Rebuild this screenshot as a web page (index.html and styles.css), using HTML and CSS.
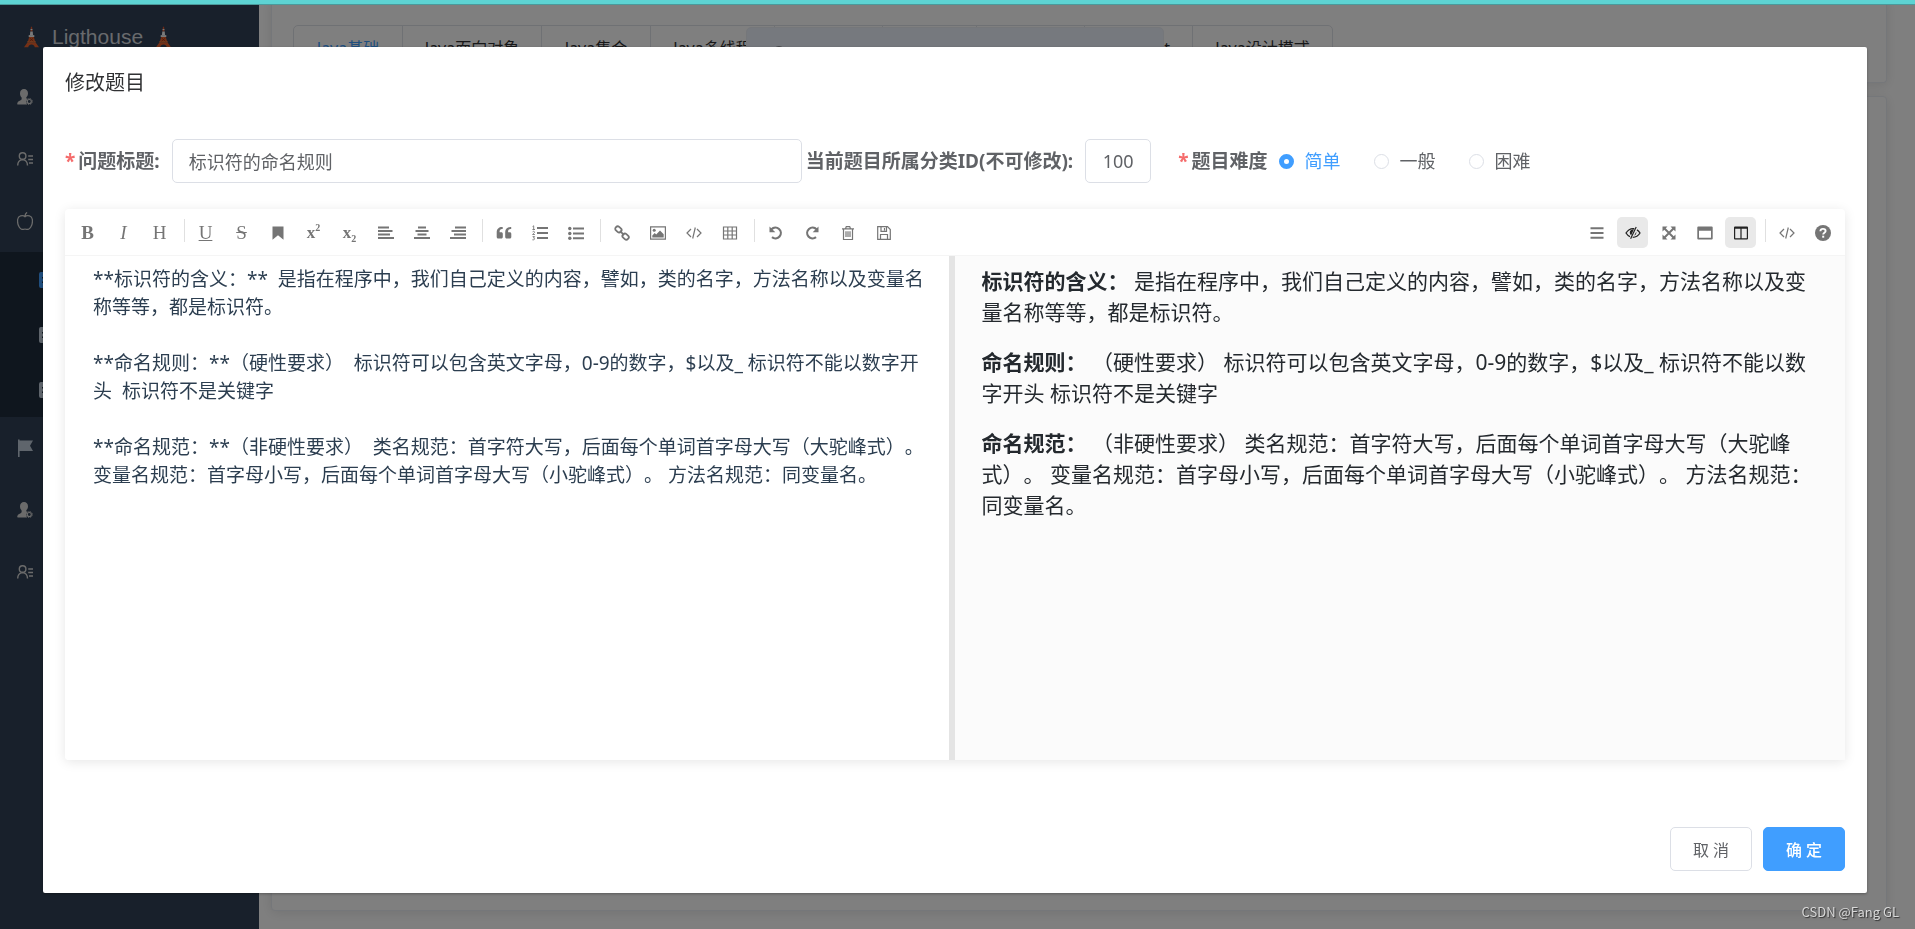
FILE: index.html
```html
<!DOCTYPE html>
<html lang="zh-CN">
<head>
<meta charset="utf-8">
<title>修改题目</title>
<link rel="stylesheet" href="styles.css">
</head>
<body>
<svg class="sprite" aria-hidden="true">
  <symbol id="tower" viewBox="0 0 16 22">
    <path d="M7.400 0h1.200l.5 5H6.900z" fill="#e0552a"/>
    <path d="M6.700 5h2.600l.4 4H6.300z" fill="#f4f4f4"/>
    <path d="M7 2.500h2v1.200H7z" fill="#f4f4f4"/>
    <path d="M5 9h6v2H5z" fill="#f4f4f4"/>
    <path d="M5.500 11h5l1.400 5H4.100z" fill="#e8602c"/>
    <path d="M3.500 15.500h9v1.600h-9z" fill="#f07a3c"/>
    <path d="M3.400 17h9.200L16 22h-4.500c-.4-2-1.700-3-3.500-3s-3.100 1-3.500 3H0z" fill="#e8602c"/>
    <path d="M6 12l4 3.500M10 12l-4 3.500" stroke="#8a3212" stroke-width=".7"/>
  </symbol>
  <symbol id="user-gear" viewBox="0 0 16 16">
    <path d="M7 0c2.400 0 4 1.700 4 4.200 0 1.800-.7 3.200-1.700 4 0 1 .3 1.500 1.100 1.900-.9.900-1.300 2-1.200 3.200.1 1 .5 1.700 1 2.200H1c-.7 0-.9-.4-.7-1.200.5-1.800 1.900-2.300 3.700-3.200.7-.4.8-1.600.6-2.700C3.600 7.500 3 6 3 4.200 3 1.700 4.600 0 7 0z" fill="currentColor"/>
    <circle cx="12.300" cy="12.500" r="2" fill="none" stroke="currentColor" stroke-width="1.100"/>
    <circle cx="12.300" cy="12.500" r="3" fill="none" stroke="currentColor" stroke-width="1" stroke-dasharray="1.200 1.150"/>
  </symbol>
  <symbol id="user-list" viewBox="0 0 16 16">
    <g fill="none" stroke="currentColor" stroke-width="1.400">
      <circle cx="5.600" cy="5" r="3.300"/>
      <path d="M.7 14.500c0-3.400 1.600-5.600 4.900-5.900 3.300.3 4.900 2.500 4.900 5.900M11.200 5H16M11.200 8.500H16M12 12H16"/>
    </g>
  </symbol>
  <symbol id="apple" viewBox="0.500 0.700 15 16.700">
    <path d="M8 5C6.300 3.400 1 3.400 1 9c0 4.500 2.500 8 4.800 8 1 0 1.300-.4 2.200-.4s1.200.4 2.200.4C12.500 17 15 13.500 15 9c0-5.600-5.300-5.600-7-4zM8 5c0-2.200.6-3.400 2-4" fill="none" stroke="currentColor" stroke-width="1.200"/>
  </symbol>
  <symbol id="doc" viewBox="0 0 16 16">
    <path d="M2 0h12a2 2 0 0 1 2 2v12a2 2 0 0 1-2 2H2a2 2 0 0 1-2-2V2a2 2 0 0 1 2-2zm1 5v1.500h10V5zm0 4.500V11h7V9.500z" fill="currentColor" fill-rule="evenodd"/>
  </symbol>
  <symbol id="flag" viewBox="0 0 16 18">
    <path d="M1 .5h1.600V18H1zM2.600 1.500H16l-3 5.200 3 5.300H2.600z" fill="currentColor"/>
  </symbol>
  <symbol id="bookmark" viewBox="0 0 16 16"><path d="M2.500 1.500h11v13.200L8 10.200l-5.500 4.500z" fill="currentColor"/></symbol>
  <symbol id="align-left" viewBox="0 0 16 16"><path d="M0 1.500h11v2H0zM0 5h14.500v2H0zM0 8.500h12v2H0zM0 12h16v2H0z" fill="currentColor"/></symbol>
  <symbol id="align-center" viewBox="0 0 16 16"><path d="M4 1.500h8v2H4zM1.500 5h13v2h-13zM3.500 8.500h9v2h-9zM0 12h16v2H0z" fill="currentColor"/></symbol>
  <symbol id="align-right" viewBox="0 0 16 16"><path d="M5 1.500h11v2H5zM1.500 5H16v2H1.500zM4 8.500h12v2H4zM0 12h16v2H0z" fill="currentColor"/></symbol>
  <symbol id="quote" viewBox="0 0 16 16"><path d="M6.700 2v2H6C4.500 4 3.600 5 3.600 6.600v.6h1.700c.9 0 1.500.6 1.500 1.500v3.200c0 .9-.6 1.500-1.500 1.500H2.200C1.300 13.400.7 12.800.7 11.900V7C.7 4 3 2 6 2zM15.200 2v2h-.7c-1.500 0-2.400 1-2.400 2.600v.6h1.700c.9 0 1.500.6 1.500 1.500v3.200c0 .9-.6 1.500-1.500 1.500h-3.100c-.9 0-1.500-.6-1.500-1.500V7c0-3 2.300-5 5.300-5z" fill="currentColor"/></symbol>
  <symbol id="list-ol" viewBox="0 0 16 16"><path d="M5 2h11v2H5zM5 7h11v2H5zM5 12h11v2H5z" fill="currentColor"/><path d="M.6 1.500l1.100-.7v3.700M.4 4.500h2.600M.6 6.800c.8-.9 2.100-.4 1.900.5C2.400 8 1.300 8.500.6 9.500h2.300M.6 11.600h2L1.500 13c1.700 0 1.500 2.300-1.100 1.800" fill="none" stroke="currentColor" stroke-width=".9"/></symbol>
  <symbol id="list-ul" viewBox="0 0 16 16"><g fill="currentColor"><circle cx="1.800" cy="3.500" r="1.700"/><circle cx="1.800" cy="8.500" r="1.700"/><circle cx="1.800" cy="13.300" r="1.700"/><path d="M5 2.500h11v2H5zM5 7.500h11v2H5zM5 12.300h11v2H5z"/></g></symbol>
  <symbol id="link" viewBox="0 0 16 16"><g fill="none" stroke="currentColor" stroke-width="1.800"><rect x="1.100" y="2" width="6.600" height="4.800" rx="2.200" transform="rotate(42 4.400 4.400)"/><rect x="8.300" y="9.200" width="6.600" height="4.800" rx="2.200" transform="rotate(42 11.600 11.600)"/><path d="M5.800 5.800l4.400 4.400"/></g></symbol>
  <symbol id="image" viewBox="0 0 16 16"><path d="M.6 1.900h14.800v12.200H.6z" fill="none" stroke="currentColor" stroke-width="1.200"/><circle cx="4.200" cy="5.200" r="1.500" fill="currentColor"/><path d="M2.300 12.600v-2.200l2.400-2.400 1.500 1.400 3.800-3.800 3.700 3.700v3.300z" fill="currentColor"/></symbol>
  <symbol id="code" viewBox="0 0 16 16"><path d="M5 4L1 8l4 4M11 4l4 4-4 4M9.300 2.500l-2.600 11" fill="none" stroke="currentColor" stroke-width="1.200"/></symbol>
  <symbol id="table" viewBox="0 0 16 16"><path d="M1.500 2h13v12h-13zM1.500 6h13M1.500 10h13M5.800 2v12M10.200 2v12" fill="none" stroke="currentColor" stroke-width="1.200"/></symbol>
  <symbol id="undo" viewBox="0 0 16 16"><path d="M3.500 4.300A5.400 5.400 0 1 1 4 12.200" fill="none" stroke="currentColor" stroke-width="2.200"/><path d="M1.500 1.500v5.800h5.800z" fill="currentColor"/></symbol>
  <symbol id="redo" viewBox="0 0 16 16"><path d="M12.500 4.300A5.400 5.400 0 1 0 12 12.200" fill="none" stroke="currentColor" stroke-width="2.200"/><path d="M14.500 1.500v5.800H8.700z" fill="currentColor"/></symbol>
  <symbol id="trash" viewBox="0 0 16 16"><path d="M2 3.800h12M3.500 3.800v10.700h9V3.800M5.500 3.800l.8-2.200h3.400l.8 2.200M6 6.300V12M8 6.300V12M10 6.300V12" fill="none" stroke="currentColor" stroke-width="1.200"/></symbol>
  <symbol id="save" viewBox="0 0 16 16"><path d="M1.700 1.700h9.800l2.800 2.800v9.800H1.700zM4.500 14V9.500h7V14M5 2v4.300h5.500V2M8.500 3v2.500" fill="none" stroke="currentColor" stroke-width="1.200"/></symbol>
  <symbol id="bars" viewBox="0 0 16 16"><path d="M1.500 2.300h13v2h-13zM1.500 7h13v2h-13zM1.500 11.700h13v2h-13z" fill="currentColor"/></symbol>
  <symbol id="eye-off" viewBox="0 0 16 16"><path d="M9.300 3.700C5.800 3 3 5 1 8c1 1.600 2.400 2.900 4 3.600M12 4.900c1.200.8 2.200 1.800 3 3.100-1.700 2.800-4 4.300-7.300 4.300" fill="none" stroke="currentColor" stroke-width="1.300"/><path d="M11.200 2L5.600 13.800" stroke="currentColor" stroke-width="1.200"/><path d="M8.900 4.200C6.300 4.100 4.800 5.700 4.800 7.600c0 1.200.5 2.100 1.400 2.700zM11.300 6.700c.3 1.800-.5 3.300-2.200 4z" fill="currentColor"/></symbol>
  <symbol id="expand" viewBox="0 0 16 16"><path d="M1.500 1.500h5L1.500 6.500zM14.500 1.500v5l-5-5zM1.500 14.500v-5l5 5zM14.500 14.500h-5l5-5z" fill="currentColor"/><path d="M3 3l10 10M13 3L3 13" stroke="currentColor" stroke-width="2"/></symbol>
  <symbol id="window" viewBox="0 0 16 16"><path d="M1.300 1.500h13.400a1 1 0 0 1 1 1v11a1 1 0 0 1-1 1H1.300a1 1 0 0 1-1-1v-11a1 1 0 0 1 1-1zm.7 4.200v7.100h12V5.700z" fill="currentColor" fill-rule="evenodd"/></symbol>
  <symbol id="columns" viewBox="0 0 16 16"><path d="M2 1.500h12a1 1 0 0 1 1 1v11a1 1 0 0 1-1 1H2a1 1 0 0 1-1-1v-11a1 1 0 0 1 1-1zm.2 2.300v9.500h5.200V3.800zm6.400 0v9.500h5.200V3.800z" fill="currentColor" fill-rule="evenodd"/></symbol>
  <symbol id="help" viewBox="0 0 16 16"><circle cx="8" cy="8" r="8" fill="currentColor"/><path d="M5.400 6.200C5.500 4.600 6.500 3.900 8 3.900c1.600 0 2.600.8 2.600 2.100 0 1.800-2.400 1.700-2.400 3.500" fill="none" stroke="#fff" stroke-width="1.900"/><path d="M7.200 10.700h2v2h-2z" fill="#fff"/></symbol>
</svg>

<div class="app">
  <aside class="sidebar">
    <div class="logo">
      <svg class="tower"><use href="#tower"/></svg>
      <span class="logo-name">Ligthouse</span>
      <svg class="tower"><use href="#tower"/></svg>
    </div>
    <nav class="menu">
      <a class="menu-item" href="#" aria-label="用户"><svg class="menu-icon"><use href="#user-gear"/></svg></a>
      <a class="menu-item" href="#" aria-label="角色"><svg class="menu-icon"><use href="#user-list"/></svg></a>
      <a class="menu-item" href="#" aria-label="题库"><svg class="menu-icon"><use href="#apple"/></svg></a>
      <div class="submenu">
        <a class="submenu-item is-active" href="#" aria-label="题目"><svg class="menu-icon"><use href="#doc"/></svg></a>
        <a class="submenu-item" href="#" aria-label="分类"><svg class="menu-icon"><use href="#doc"/></svg></a>
        <a class="submenu-item" href="#" aria-label="记录"><svg class="menu-icon"><use href="#doc"/></svg></a>
      </div>
      <a class="menu-item is-muted" href="#" aria-label="标记"><svg class="menu-icon"><use href="#flag"/></svg></a>
      <a class="menu-item" href="#" aria-label="用户"><svg class="menu-icon"><use href="#user-gear"/></svg></a>
      <a class="menu-item" href="#" aria-label="角色"><svg class="menu-icon"><use href="#user-list"/></svg></a>
    </nav>
  </aside>
  <main class="main">
    <section class="card card-tabs">
      <div class="tabs">
        <button class="tab is-active">Java基础</button>
        <button class="tab">Java面向对象</button>
        <button class="tab">Java集合</button>
        <button class="tab">Java多线程</button>
        <span class="tab"></span>
        <span class="tab"></span>
        <span class="tab"></span>
        <button class="tab tab-end">t</button>
        <button class="tab">Java设计模式</button>
      </div>
    </section>
    <section class="card card-body"></section>
  </main>
  <div class="message"><span class="message-dot"></span></div>
</div>

<div class="overlay">
  <div class="dialog" role="dialog" aria-labelledby="dialog-title">
    <h1 class="dialog-title" id="dialog-title">修改题目</h1>
    <form class="form-row">
      <label class="label is-required" for="title">问题标题:</label>
      <input class="input input-title" id="title" type="text" value="标识符的命名规则">
      <label class="label label-id" for="cid">当前题目所属分类ID(不可修改):</label>
      <input class="input input-id" id="cid" type="text" value="100" readonly>
      <div class="level" role="radiogroup" aria-labelledby="level-label">
        <span class="label is-required" id="level-label">题目难度</span>
        <label class="radio"><input class="radio-dot" type="radio" name="level" checked><span class="radio-text">简单</span></label>
        <label class="radio"><input class="radio-dot" type="radio" name="level"><span class="radio-text">一般</span></label>
        <label class="radio"><input class="radio-dot" type="radio" name="level"><span class="radio-text">困难</span></label>
      </div>
    </form>

    <div class="editor">
      <div class="toolbar">
        <div class="tools">
          <button class="tool"><b>B</b></button>
          <button class="tool"><i>I</i></button>
          <button class="tool">H</button>
          <span class="divider"></span>
          <button class="tool"><u>U</u></button>
          <button class="tool"><s>S</s></button>
          <button class="tool" aria-label="标记"><svg class="icon"><use href="#bookmark"/></svg></button>
          <button class="tool tool-script"><span>x<sup>2</sup></span></button>
          <button class="tool tool-script"><span>x<sub>2</sub></span></button>
          <button class="tool" aria-label="左对齐"><svg class="icon"><use href="#align-left"/></svg></button>
          <button class="tool" aria-label="居中"><svg class="icon"><use href="#align-center"/></svg></button>
          <button class="tool" aria-label="右对齐"><svg class="icon"><use href="#align-right"/></svg></button>
          <span class="divider"></span>
          <button class="tool" aria-label="引用"><svg class="icon"><use href="#quote"/></svg></button>
          <button class="tool" aria-label="有序列表"><svg class="icon"><use href="#list-ol"/></svg></button>
          <button class="tool" aria-label="无序列表"><svg class="icon"><use href="#list-ul"/></svg></button>
          <span class="divider"></span>
          <button class="tool" aria-label="链接"><svg class="icon"><use href="#link"/></svg></button>
          <button class="tool" aria-label="图片"><svg class="icon"><use href="#image"/></svg></button>
          <button class="tool" aria-label="代码"><svg class="icon"><use href="#code"/></svg></button>
          <button class="tool" aria-label="表格"><svg class="icon"><use href="#table"/></svg></button>
          <span class="divider"></span>
          <button class="tool" aria-label="撤销"><svg class="icon"><use href="#undo"/></svg></button>
          <button class="tool" aria-label="重做"><svg class="icon"><use href="#redo"/></svg></button>
          <button class="tool" aria-label="清空"><svg class="icon"><use href="#trash"/></svg></button>
          <button class="tool" aria-label="保存"><svg class="icon"><use href="#save"/></svg></button>
        </div>
        <div class="tools">
          <button class="tool" aria-label="目录"><svg class="icon"><use href="#bars"/></svg></button>
          <button class="tool is-on" aria-label="预览"><svg class="icon"><use href="#eye-off"/></svg></button>
          <button class="tool" aria-label="全屏"><svg class="icon"><use href="#expand"/></svg></button>
          <button class="tool" aria-label="阅读"><svg class="icon"><use href="#window"/></svg></button>
          <button class="tool is-on" aria-label="双栏"><svg class="icon"><use href="#columns"/></svg></button>
          <span class="divider"></span>
          <button class="tool" aria-label="源码"><svg class="icon"><use href="#code"/></svg></button>
          <button class="tool" aria-label="帮助"><svg class="icon"><use href="#help"/></svg></button>
        </div>
      </div>
      <div class="panes">
        <textarea class="source" aria-label="内容" spellcheck="false">**标识符的含义：**  是指在程序中，我们自己定义的内容，譬如，类的名字，方法名称以及变量名称等等，都是标识符。

**命名规则：**（硬性要求）  标识符可以包含英文字母，0-9的数字，$以及_ 标识符不能以数字开头  标识符不是关键字

**命名规范：**（非硬性要求）  类名规范：首字符大写，后面每个单词首字母大写（大驼峰式）。 变量名规范：首字母小写，后面每个单词首字母大写（小驼峰式）。 方法名规范：同变量名。</textarea>
        <article class="preview">
          <p><strong>标识符的含义：</strong> 是指在程序中，我们自己定义的内容，譬如，类的名字，方法名称以及变量名称等等，都是标识符。</p>
          <p><strong>命名规则：</strong> （硬性要求） 标识符可以包含英文字母，0-9的数字，$以及_ 标识符不能以数字开头 标识符不是关键字</p>
          <p><strong>命名规范：</strong> （非硬性要求） 类名规范：首字符大写，后面每个单词首字母大写（大驼峰式）。 变量名规范：首字母小写，后面每个单词首字母大写（小驼峰式）。 方法名规范：同变量名。</p>
        </article>
      </div>
    </div>

    <div class="footer">
      <button class="btn">取 消</button>
      <button class="btn btn-primary">确 定</button>
    </div>
  </div>
</div>

<div class="progress"></div>
<div class="watermark">CSDN @Fang GL</div>
</body>
</html>
```
FILE: styles.css
```css
* { box-sizing: border-box; }

body {
  margin: 0;
  font-family: "Noto Sans", "Noto Sans CJK SC", sans-serif;
  color: #606266;
  text-spacing-trim: space-all;
}

button, input, textarea { font-family: inherit; color: inherit; margin: 0; }
button { cursor: pointer; }

.sprite { display: none; }

/* Page behind the dialog */
.app { position: relative; display: flex; height: 100vh; overflow: hidden; }

.sidebar { flex: none; width: 259px; background: #304156; }

.logo {
  display: flex;
  align-items: center;
  gap: 13px;
  height: 66px;
  padding: 8px 24px 0;
  color: #d0d4da;
  font: 21px/24px "Liberation Sans", Arial, sans-serif;
}
.tower { width: 15px; height: 22px; }

.menu-item {
  display: flex;
  align-items: center;
  height: 62px;
  padding-left: 17px;
  color: #d6d6d6;
}
.menu-item.is-muted { color: #bfcbd9; }
.menu-icon { width: 16px; height: 18px; }
.submenu { background: #1f2d3d; }
.submenu-item {
  display: flex;
  align-items: center;
  height: 55px;
  padding-left: 39px;
  color: #bfcbd9;
}
.submenu-item.is-active { color: #409eff; }

.main {
  flex: 1;
  display: flex;
  flex-direction: column;
  gap: 13px;
  padding: 0 28px 18px 12px;
  background: #fff;
}
.card {
  border: 1px solid #ebeef5;
  border-radius: 4px;
  background: #fff;
  box-shadow: 0 2px 12px rgba(0, 0, 0, .1);
}
.card-tabs { height: 83px; padding: 25px 21px 0; border-top: 0; }
.card-body { flex: 1; }

.tabs {
  display: inline-grid;
  grid-template-columns: 108px 139px 109px 124px 108px 94px 108px 108px 140px;
  height: 46px;
  border: 1px solid #dfe2e8;
  border-radius: 5px;
}
.tab {
  border: 0;
  border-left: 1px solid #dfe2e8;
  background: none;
  padding: 0;
  color: #303133;
  font-size: 16px;
  line-height: 44px;
}
.tab:first-child { border-left: 0; }
.tab.is-active { color: #409eff; }
.tab-end { padding-right: 22px; text-align: right; }

.message {
  position: absolute;
  top: 27px;
  left: 0;
  right: 5px;
  width: 418px;
  height: 54px;
  margin: 0 auto;
  padding: 18px 26px;
  border: 1px solid #ebeef5;
  border-radius: 5px;
  background: #edf2fc;
}
.message-dot {
  display: block;
  width: 12px;
  height: 12px;
  border-radius: 50%;
  background: #909399;
}

/* Dialog */
.overlay {
  position: fixed;
  inset: 0;
  overflow: auto;
  padding: 47px 48px 36px 43px;
  background: rgba(0, 0, 0, .5);
}
.dialog {
  padding: 22px;
  border-radius: 2px;
  background: #fff;
  box-shadow: 0 1px 3px rgba(0, 0, 0, .3);
}
.dialog-title {
  margin: 0 0 42px;
  color: #303133;
  font-size: 20px;
  font-weight: 400;
  line-height: 28px;
}

.form-row { display: flex; align-items: center; margin-bottom: 26px; }
.label { font-size: 19px; font-weight: 700; line-height: 44px; white-space: nowrap; }
.is-required::before { content: "*"; margin-right: 3px; color: #f56c6c; }
.input {
  height: 44px;
  border: 1px solid #dcdfe6;
  border-radius: 5px;
  background: #fff;
  font-size: 18px;
  outline: 0;
}
.input-title { flex: 0 1 630px; min-width: 0; margin-left: 12px; padding: 0 16px; }
.label-id { margin-left: 4px; }
.input-id { width: 66px; margin-left: 12px; text-align: center; }
.level { display: flex; align-items: center; margin-left: 27px; }
.radio { display: flex; align-items: center; margin-right: 33px; font-size: 18px; line-height: 44px; white-space: nowrap; }
.level .label { margin-right: 11px; }
.radio-dot {
  appearance: none;
  width: 15px;
  height: 15px;
  margin: 0 11px 0 0;
  border: 1px solid #dcdfe6;
  border-radius: 50%;
  background: #fff;
}
.radio-dot:checked { border: 5px solid #409eff; }
.radio-dot:checked + .radio-text { color: #409eff; }

/* Markdown editor */
.editor {
  display: flex;
  flex-direction: column;
  min-height: 551px;
  border-radius: 4px;
  box-shadow: 0 2px 12px rgba(0, 0, 0, .1);
}
.toolbar {
  display: flex;
  justify-content: space-between;
  padding: 8px 7px 7px;
  border-bottom: 1px solid #f5f5f5;
}
.tools { display: flex; gap: 5px; }
.tool {
  display: flex;
  align-items: center;
  justify-content: center;
  width: 31px;
  height: 31px;
  padding: 0;
  border: 0;
  border-radius: 5px;
  background: none;
  color: #757575;
  font: 19px/30px "Liberation Serif", "Times New Roman", serif;
}
.tool.is-on { background: #e9e9e9; color: #222; }
.tool-script { font-size: 17px; font-weight: 700; }
.tool-script sup, .tool-script sub { font-size: 10px; line-height: 0; }
.icon { width: 16px; height: 16px; }
.divider { width: 1px; height: 23px; margin: 2px 0 0 4px; background: #e0e0e0; }

.panes { flex: 1; display: flex; }
.source {
  flex: 1 1 0;
  min-width: 0;
  padding: 9px 16px 8px 28px;
  border: 0;
  border-radius: 0 0 0 4px;
  background: #fff;
  color: #2c3e50;
  font-size: 19px;
  line-height: 28px;
  outline: 0;
  resize: none;
}
.preview {
  flex: 1 1 0;
  min-width: 0;
  padding: 10px 24px 10px 27px;
  border-left: 6px solid #e4e4e4;
  background: #fbfbfb;
  color: #24292e;
  font-size: 21px;
  line-height: 31px;
}
.preview p { margin: 0 0 19px; }

.footer { display: flex; justify-content: flex-end; gap: 11px; margin-top: 67px; }
.btn {
  width: 82px;
  height: 44px;
  padding: 0;
  border: 1px solid #dcdfe6;
  border-radius: 5px;
  background: #fff;
  font-size: 16px;
}
.btn-primary { border-color: #409eff; background: #409eff; color: #fff; font-weight: 500; }

.progress {
  position: fixed;
  inset: 0 0 auto;
  height: 5px;
  border-bottom: 1px solid #4a9a9b;
  background: #5dd3d3;
}
.watermark {
  position: fixed;
  right: 16px;
  bottom: 8px;
  color: #d8d8d8;
  font-family: "Noto Sans CJK SC", sans-serif;
  font-size: 13px;
  line-height: 18px;
  text-shadow: 1px 1px 1px #333;
}
```
